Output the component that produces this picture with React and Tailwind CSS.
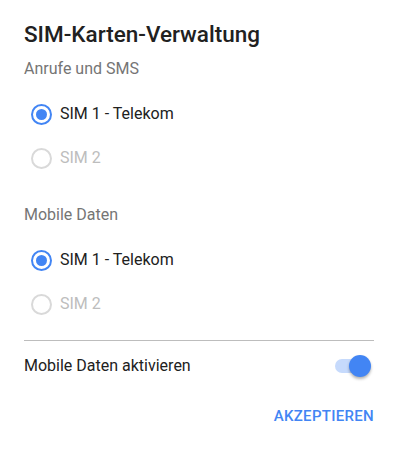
import { useState } from 'react';

function Radio({ label, checked, disabled, onSelect }) {
    return (
        <button
            type="button"
            disabled={disabled}
            onClick={onSelect}
            className="flex h-[44px] w-full items-center gap-[8px] text-left"
        >
            <span
                className={
                    'flex h-[21px] w-[21px] shrink-0 items-center justify-center rounded-full border-2 ' +
                    (checked ? 'border-[#4285f4]' : 'border-[#d9d9d9]')
                }
            >
                {checked && <span className="h-[11px] w-[11px] rounded-full bg-[#4285f4]" />}
            </span>
            <span className={'text-[16px] leading-6 ' + (disabled ? 'text-[#bdbdbd]' : 'text-[#212121]')}>
                {label}
            </span>
        </button>
    );
}

function Section({ title, value, onChange }) {
    return (
        <div>
            <p className="text-[16px] leading-6 text-[#757575]">{title}</p>
            <div className="mt-[11px] pl-[7px]">
                <Radio label="SIM 1 - Telekom" checked={value === 1} onSelect={() => onChange(1)} />
                <Radio label="SIM 2" checked={value === 2} disabled />
            </div>
        </div>
    );
}

export default function App() {
    const [calls, setCalls] = useState(1);
    const [data, setData] = useState(1);
    const [enabled, setEnabled] = useState(true);

    return (
        <div className="h-[450px] w-[401px] bg-white pl-6 pr-[27px] pt-5 font-['Roboto',sans-serif]">
            <h2 className="text-[22.5px] font-medium leading-7 text-[#212121]">SIM-Karten-Verwaltung</h2>

            <div className="mt-[9px]">
                <Section title="Anrufe und SMS" value={calls} onChange={setCalls} />
            </div>

            <div className="mt-[23px]">
                <Section title="Mobile Daten" value={data} onChange={setData} />
            </div>

            {/* divider + toggle */}
            <div className="mt-[14px] h-px bg-[#bdbdbd]" />
            <div className="flex h-[50px] items-center justify-between">
                <span className="text-[16px] leading-6 text-[#212121]">Mobile Daten aktivieren</span>
                <button
                    type="button"
                    onClick={() => setEnabled(!enabled)}
                    className="relative mr-[5px] h-[14px] w-[34px] rounded-full bg-[#c6dafc]"
                >
                    <span
                        className={
                            'absolute top-1/2 h-[22px] w-[22px] -translate-y-1/2 rounded-full bg-[#4285f4] shadow-[0_2px_3px_rgba(0,0,0,0.3)] ' +
                            (enabled ? 'right-[-2px]' : 'left-[-2px]')
                        }
                    />
                </button>
            </div>

            <div className="mt-[7px] flex justify-end">
                <button type="button" className="h-9 text-[15px] font-medium tracking-[0.3px] text-[#4285f4]">
                    AKZEPTIEREN
                </button>
            </div>
        </div>
    );
}
